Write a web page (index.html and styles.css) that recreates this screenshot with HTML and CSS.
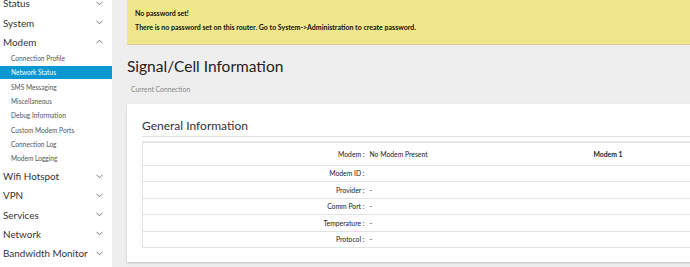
FILE: index.html
```html
<!DOCTYPE html>
<html>
<head>
    <title>Signal/Cell Information</title>
    <link rel="stylesheet" href="styles.css">
</head>
<body>
    <div class="page">
        <aside class="sidebar">
            <ul class="menu">
                <li class="menu-item">Status <svg class="chev" viewBox="0 0 8 5"><polyline points="0.5,0.5 4,4 7.5,0.5"/></svg></li>
                <li class="menu-item">System <svg class="chev" viewBox="0 0 8 5"><polyline points="0.5,0.5 4,4 7.5,0.5"/></svg></li>
                <li class="menu-item">Modem <svg class="chev" viewBox="0 0 8 5"><polyline points="0.5,4.5 4,1 7.5,4.5"/></svg></li>
                <li>
                    <ul class="submenu">
                        <li class="sub-item">Connection Profile</li>
                        <li class="sub-item active">Network Status</li>
                        <li class="sub-item">SMS Messaging</li>
                        <li class="sub-item">Miscellaneous</li>
                        <li class="sub-item">Debug Information</li>
                        <li class="sub-item">Custom Modem Ports</li>
                        <li class="sub-item">Connection Log</li>
                        <li class="sub-item">Modem Logging</li>
                    </ul>
                </li>
                <li class="menu-item">Wifi Hotspot <svg class="chev" viewBox="0 0 8 5"><polyline points="0.5,0.5 4,4 7.5,0.5"/></svg></li>
                <li class="menu-item">VPN <svg class="chev" viewBox="0 0 8 5"><polyline points="0.5,0.5 4,4 7.5,0.5"/></svg></li>
                <li class="menu-item">Services <svg class="chev" viewBox="0 0 8 5"><polyline points="0.5,0.5 4,4 7.5,0.5"/></svg></li>
                <li class="menu-item">Network <svg class="chev" viewBox="0 0 8 5"><polyline points="0.5,0.5 4,4 7.5,0.5"/></svg></li>
                <li class="menu-item">Bandwidth Monitor <svg class="chev" viewBox="0 0 8 5"><polyline points="0.5,0.5 4,4 7.5,0.5"/></svg></li>
            </ul>
        </aside>

        <main class="main">
            <div class="alert">
                <p class="alert-title">No password set!</p>
                <p class="alert-text">There is no password set on this router. Go to System-&gt;Administration to create password.</p>
            </div>

            <h2 class="page-title">Signal/Cell Information</h2>
            <div class="tabs">Current Connection</div>

            <section class="card">
                <h3 class="card-title">General Information</h3>
                <table class="info-table">
                    <tr>
                        <td class="label">Modem :</td>
                        <td class="value">No Modem Present</td>
                        <td class="modem-name">Modem 1</td>
                    </tr>
                    <tr>
                        <td class="label">Modem ID :</td>
                        <td class="value"></td>
                        <td></td>
                    </tr>
                    <tr>
                        <td class="label">Provider :</td>
                        <td class="value">-</td>
                        <td></td>
                    </tr>
                    <tr>
                        <td class="label">Comm Port :</td>
                        <td class="value">-</td>
                        <td></td>
                    </tr>
                    <tr>
                        <td class="label">Temperature :</td>
                        <td class="value">-</td>
                        <td></td>
                    </tr>
                    <tr>
                        <td class="label">Protocol :</td>
                        <td class="value">-</td>
                        <td></td>
                    </tr>
                </table>
            </section>
        </main>
    </div>
</body>
</html>
```

FILE: styles.css
```css
* {
    box-sizing: border-box;
}

html, body {
    margin: 0;
    height: 100%;
    overflow: hidden;
}

body {
    font-family: Lato, 'Open Sans', sans-serif;
    background: #eeeeee;
    color: #333;
}

.page {
    display: flex;
    min-height: 100%;
}

/* sidebar */

.sidebar {
    flex: 0 0 112px;
    width: 112px;
    min-width: 0;
    overflow: hidden;
    background: #fff;
}

.menu, .submenu {
    list-style: none;
    margin: 0;
    padding: 0;
}

.menu {
    margin-top: -6.3px;
}

.menu-item {
    display: flex;
    justify-content: space-between;
    align-items: center;
    height: 19.3px;
    padding: 0 9px 0 3px;
    font-size: 9.9px;
    color: #333;
    white-space: nowrap;
}

.chev {
    width: 7px;
    height: 5px;
    fill: none;
    stroke: #555;
    stroke-width: 0.9;
}

.sub-item {
    height: 12.7px;
    line-height: 12.7px;
    margin-bottom: 1.6px;
    padding-left: 11px;
    font-size: 6.6px;
    color: #555;
}

.sub-item:first-child {
    margin-top: 0.6px;
}

.sub-item.active {
    background: #0d97d1;
    color: #fff;
}

/* main */

.main {
    flex: 1;
    min-width: 0;
    padding-left: 15px;
}

.alert {
    background: #f0e68c;
    border-bottom: 1px solid #d8d0a0;
    height: 45px;
    padding: 9px 8px 0;
    font-size: 7px;
    font-weight: bold;
    color: #111;
    white-space: nowrap;
}

.alert p {
    margin: 0;
}

.alert-text {
    margin-top: 6px !important;
}

.page-title {
    margin: 9px 0 0;
    font-size: 15.5px;
    font-weight: normal;
    color: #222;
    height: 24px;
    line-height: 24px;
}

.tabs {
    margin: 7px 0 0 4px;
    font-size: 6.8px;
    color: #888;
}

.card {
    width: 620px;
    margin-top: 11px;
    background: #fff;
    box-shadow: 0 1px 2px rgba(0, 0, 0, 0.2);
    padding: 11px 0 14px 15px;
}

.card-title {
    margin: 0;
    font-size: 12px;
    font-weight: normal;
    color: #333;
    height: 22px;
    line-height: 21px;
    border-bottom: 1px solid #e4e4e4;
}

.info-table {
    width: 100%;
    margin-top: 4px;
    border-collapse: collapse;
    border-top: 2px solid #e6e6e6;
    font-size: 6.8px;
    color: #222;
}

.info-table td {
    border-bottom: 1px solid #e2e2e2;
    height: 16.5px;
    padding: 0;
}

.info-table tr:first-child td {
    height: 23px;
}

.info-table td:first-child {
    border-left: 1px solid #e2e2e2;
}

.label {
    width: 227px;
    text-align: right;
    padding-right: 5px !important;
}

.value {
    width: 224px;
}

.modem-name {
    font-weight: bold;
}
```
